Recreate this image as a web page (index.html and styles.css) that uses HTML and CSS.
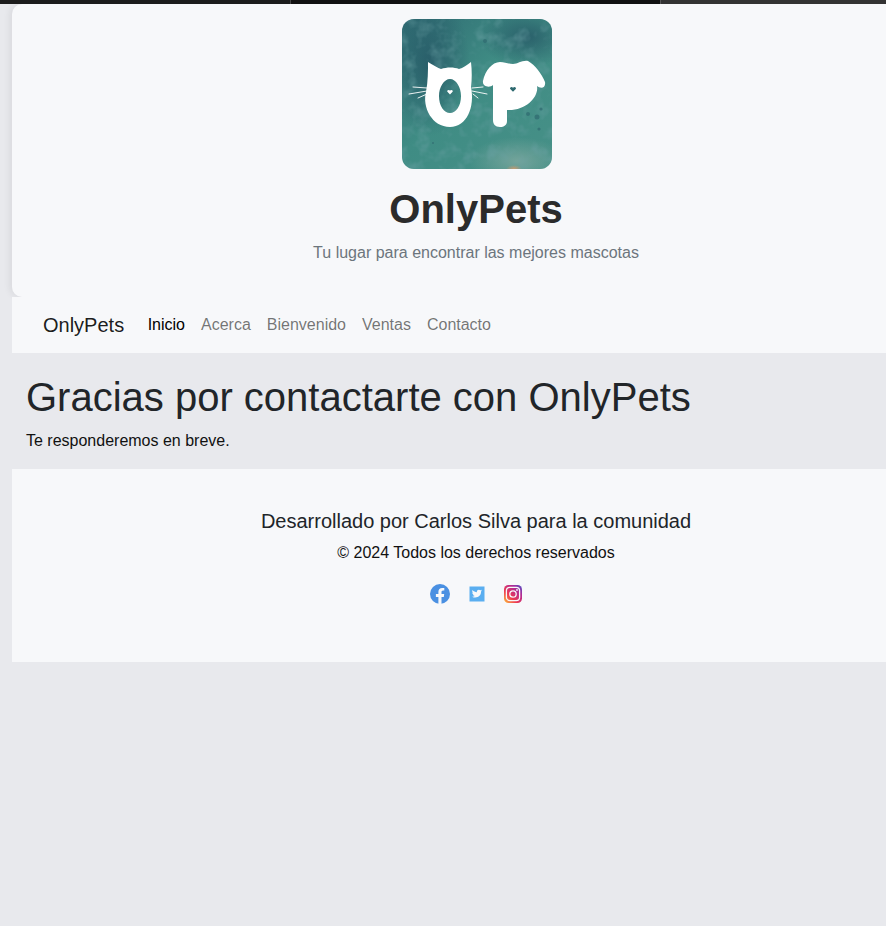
FILE: index.html
```html
<!DOCTYPE html>
<html lang="es">
<head>
    <meta charset="UTF-8">
    <meta name="viewport" content="width=device-width, initial-scale=1.0">
    <title>OnlyPets</title>
    <link rel="stylesheet" href="styles.css">
</head>
<body>
    <div class="top-bar">
        <div class="tab tab-first"></div>
        <div class="tab tab-active"></div>
        <div class="tab tab-last"></div>
    </div>
    <div class="page">
        <header class="site-header">
            <svg class="logo" viewBox="0 0 150 150" role="img" aria-label="OnlyPets logo">
                <defs>
                    <linearGradient id="logoBase" x1="0" y1="0" x2="1" y2="1">
                        <stop offset="0" stop-color="#2f6a72"/>
                        <stop offset="0.45" stop-color="#3f8c84"/>
                        <stop offset="1" stop-color="#469087"/>
                    </linearGradient>
                    <radialGradient id="logoDark" cx="0.5" cy="0.5" r="0.5">
                        <stop offset="0" stop-color="#265866" stop-opacity="0.85"/>
                        <stop offset="1" stop-color="#265866" stop-opacity="0"/>
                    </radialGradient>
                    <radialGradient id="logoLight" cx="0.5" cy="0.5" r="0.5">
                        <stop offset="0" stop-color="#7fa9a0" stop-opacity="0.8"/>
                        <stop offset="1" stop-color="#7fa9a0" stop-opacity="0"/>
                    </radialGradient>
                    <radialGradient id="logoSand" cx="0.5" cy="0.5" r="0.5">
                        <stop offset="0" stop-color="#c79a70"/>
                        <stop offset="1" stop-color="#c79a70" stop-opacity="0"/>
                    </radialGradient>
                    <filter id="logoGrain" x="0" y="0" width="100%" height="100%">
                        <feTurbulence type="fractalNoise" baseFrequency="0.07" numOctaves="3" seed="7"/>
                        <feColorMatrix values="0 0 0 0 0.15  0 0 0 0 0.36  0 0 0 0 0.38  0 0 0 1.2 -0.56"/>
                    </filter>
                </defs>
                <rect width="150" height="150" fill="url(#logoBase)"/>
                <ellipse cx="28" cy="45" rx="40" ry="72" fill="url(#logoDark)"/>
                <ellipse cx="125" cy="18" rx="48" ry="30" fill="url(#logoDark)"/>
                <ellipse cx="115" cy="142" rx="48" ry="24" fill="url(#logoLight)"/>
                <ellipse cx="112" cy="150" rx="8" ry="4" fill="url(#logoSand)"/>
                <rect width="150" height="150" filter="url(#logoGrain)"/>
                <g class="logo-specks">
                    <circle cx="83" cy="22" r="2"/>
                    <circle cx="126" cy="95" r="2"/>
                    <circle cx="135" cy="98" r="2.5"/>
                    <circle cx="139" cy="90" r="1.6"/>
                    <circle cx="137" cy="110" r="1.6"/>
                    <circle cx="31" cy="124" r="1"/>
                </g>
                <path class="logo-shape" fill-rule="evenodd" d="M26 43 C31 46 36 49 39 50 C45 48 52 48 57 50 C61 49 65 46 69 43 C70 52 70 60 69 68 C73 88 65 108 48 108 C30 108 20 88 24 73 C26 62 26 52 26 43 Z M48 60 C42 60 37 68 37 77 C37 87 42 94 48 94 C54 94 59 87 59 77 C59 68 54 60 48 60 Z"/>
                <path class="logo-line" d="M25 69 L11 68 M25 72 L7 75 M25 75 L16 79 M70 69 L81 68 M70 72 L85 75 M71 75 L76 79"/>
                <path class="logo-shape" d="M81 62 C83 52 90 43 98 43 C103 43 106 45 111 45 C116 45 120 41 126 42 C133 46 140 55 143 63 C144 69 139 70 135 67 C137 78 124 92 105 91 L105 102 C105 106 102 108 98 108 C93 108 91 105 91 101 L91 66 C88 69 80 68 81 62 Z"/>
                <path class="logo-shape" d="M48 75.5 L45.4 72.8 C44.6 71.6 46.6 70 48 71.6 C49.4 70 51.4 71.6 50.6 72.8 Z"/>
                <path class="logo-heart" d="M111 72.8 L108.2 70 C107.3 68.7 109.5 67 111 68.7 C112.5 67 114.7 68.7 113.8 70 Z"/>
            </svg>
            <h1 class="site-title">OnlyPets</h1>
            <p class="site-tagline">Tu lugar para encontrar las mejores mascotas</p>
        </header>

        <nav class="navbar">
            <a class="brand" href="#">OnlyPets</a>
            <a class="nav-link active" href="#">Inicio</a>
            <a class="nav-link" href="#">Acerca</a>
            <a class="nav-link" href="#">Bienvenido</a>
            <a class="nav-link" href="#">Ventas</a>
            <a class="nav-link" href="#">Contacto</a>
        </nav>

        <main class="content">
            <h2 class="content-title">Gracias por contactarte con OnlyPets</h2>
            <p class="content-text">Te responderemos en breve.</p>
        </main>

        <footer class="site-footer">
            <p class="footer-credit">Desarrollado por Carlos Silva para la comunidad</p>
            <p class="footer-copy">© 2024 Todos los derechos reservados</p>
            <div class="social">
                <a href="#" aria-label="Facebook">
                    <svg class="social-icon" viewBox="0 0 20 20">
                        <circle cx="10" cy="10" r="10" fill="#4a90e2"/>
                        <path fill="#f7f8fa" d="M8.4 20 V12.9 H5.9 V10 H8.4 V7.8 C8.4 5.3 9.9 3.9 12.1 3.9 C13.2 3.9 14.3 4.1 14.3 4.1 V6.5 H13.1 C11.9 6.5 11.5 7.3 11.5 8 V10 H14.2 L13.8 12.9 H11.5 V20 Z"/>
                    </svg>
                </a>
                <a href="#" aria-label="Twitter">
                    <svg class="social-icon" viewBox="0 0 20 20">
                        <rect x="2.5" y="2.5" width="15" height="15" fill="#5aaef0"/>
                        <path fill="#f7f8fa" d="M15 6.6 C14.6 6.8 14.2 6.9 13.8 7 C14.2 6.7 14.6 6.3 14.7 5.8 C14.3 6 13.8 6.2 13.3 6.3 C12.5 5.5 11.2 5.5 10.4 6.3 C9.9 6.8 9.7 7.5 9.9 8.2 C8.2 8.1 6.6 7.3 5.5 6 C5 6.9 5.2 8.1 6.1 8.7 C5.8 8.7 5.5 8.6 5.2 8.5 C5.2 9.4 5.9 10.3 6.8 10.5 C6.5 10.6 6.2 10.6 5.9 10.5 C6.2 11.3 6.9 11.8 7.8 11.9 C7 12.5 6 12.8 5 12.7 C9.5 15 14.3 12.3 14 7.6 C14.4 7.3 14.7 7 15 6.6 Z"/>
                    </svg>
                </a>
                <a href="#" aria-label="Instagram">
                    <svg class="social-icon" viewBox="0 0 20 20">
                        <defs>
                            <linearGradient id="instaFill" x1="0" y1="1" x2="1" y2="0">
                                <stop offset="0" stop-color="#fdc13a"/>
                                <stop offset="0.35" stop-color="#ee3a50"/>
                                <stop offset="0.7" stop-color="#b42a92"/>
                                <stop offset="1" stop-color="#4a4fc8"/>
                            </linearGradient>
                        </defs>
                        <rect x="0" y="1" width="18" height="18" rx="4.5" fill="url(#instaFill)"/>
                        <rect x="2.4" y="3.4" width="13.2" height="13.2" rx="3.4" fill="none" stroke="#f7f8fa" stroke-width="1.3"/>
                        <circle cx="9" cy="10" r="3.2" fill="none" stroke="#f7f8fa" stroke-width="1.3"/>
                        <circle cx="13" cy="6" r="0.9" fill="#f7f8fa"/>
                    </svg>
                </a>
            </div>
        </footer>
    </div>
</body>
</html>
```

FILE: styles.css
```css
* {
    margin: 0;
    padding: 0;
    box-sizing: border-box;
}
body {
    min-height: 100vh;
    font-family: "Liberation Sans", Arial, sans-serif;
    font-size: 16px;
    line-height: 1.5;
    color: #212529;
    background-color: #e8e9ed;
}
a {
    text-decoration: none;
}

/* strip of the window above the page */
.top-bar {
    display: flex;
    height: 4px;
    background-color: #111;
}
.tab-first {
    width: 291px;
    background-color: #1c1c1c;
    border-right: 1px solid #444;
}
.tab-active {
    width: 369px;
    background-color: #111;
}
.tab-last {
    flex: 1;
    background-color: #333;
    border-left: 1px solid #555;
}

.page {
    margin-left: 12px;
}

/* header and footer centre on 476px, right of the visible middle */
.site-header {
    display: flex;
    flex-direction: column;
    align-items: center;
    height: 293px;
    padding: 15px 0 0 54px;
    background-color: #f7f8fa;
    border-radius: 10px 0 0 10px;
    box-shadow: -3px 0 6px rgba(0, 0, 0, 0.06);
}
.logo {
    display: block;
    width: 150px;
    height: 150px;
    margin-left: 2px;
    border-radius: 12px;
}
.logo-shape {
    fill: #fff;
}
.logo-line {
    fill: none;
    stroke: #fff;
    stroke-width: 0.9;
    stroke-linecap: round;
}
.logo-heart {
    fill: #2f6a70;
}
.logo-specks {
    fill: #2f6a70;
    opacity: 0.7;
}
.site-title {
    margin-top: 16px;
    font-size: 40px;
    line-height: 48px;
    font-weight: 700;
    color: #2b2b2b;
}
.site-tagline {
    margin-top: 8px;
    color: #6c757d;
}

.navbar {
    display: flex;
    align-items: center;
    gap: 16px;
    height: 56px;
    padding-left: 31px;
    background-color: #f7f8fa;
}
.brand {
    margin-right: 7.5px;
    font-size: 20px;
    color: rgba(0, 0, 0, 0.9);
}
.nav-link {
    color: rgba(0, 0, 0, 0.55);
}
.nav-link.active {
    color: #000;
}

.content {
    height: 116px;
    padding: 20px 14px 0;
}
.content-title {
    font-size: 40px;
    line-height: 48px;
    font-weight: 400;
    color: #212529;
}
.content-text {
    margin-top: 8px;
    color: #111;
}

.site-footer {
    height: 193px;
    padding: 37px 0 0 54px;
    text-align: center;
    background-color: #f7f8fa;
    color: #111;
}
.footer-credit {
    font-size: 20px;
    line-height: 30px;
    color: #212529;
}
.footer-copy {
    margin-top: 5px;
}
.social {
    display: flex;
    justify-content: center;
    gap: 17px;
    margin-top: 19px;
    padding-left: 2px;
}
.social a {
    display: block;
    height: 20px;
}
.social-icon {
    display: block;
    width: 20px;
    height: 20px;
}
```
